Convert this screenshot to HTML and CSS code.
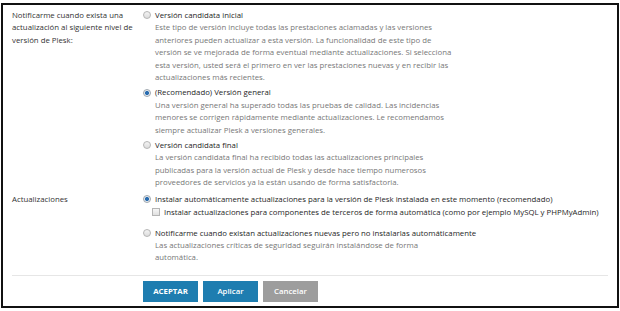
FILE: index.html
```html
<!DOCTYPE html>
<html lang="es">
<head>
<meta charset="utf-8">
<title>Actualizaciones</title>
<link rel="stylesheet" href="styles.css">
</head>
<body>
<div class="frame">
  <div class="row">
    <div class="label">Notificarme cuando exista una actualización al siguiente nivel de versión de Plesk:</div>
    <div class="field">
      <div class="option">
        <div class="opt-title"><span class="radio"></span>Versión candidata inicial</div>
        <div class="desc">Este tipo de versión incluye todas las prestaciones aclamadas y las versiones anteriores pueden actualizar a esta versión. La funcionalidad de este tipo de versión se ve mejorada de forma eventual mediante actualizaciones. Si selecciona esta versión, usted será el primero en ver las prestaciones nuevas y en recibir las actualizaciones más recientes.</div>
      </div>
      <div class="option">
        <div class="opt-title"><span class="radio checked"></span>(Recomendado) Versión general</div>
        <div class="desc">Una versión general ha superado todas las pruebas de calidad. Las incidencias menores se corrigen rápidamente mediante actualizaciones. Le recomendamos siempre actualizar Plesk a versiones generales.</div>
      </div>
      <div class="option">
        <div class="opt-title"><span class="radio"></span>Versión candidata final</div>
        <div class="desc">La versión candidata final ha recibido todas las actualizaciones principales publicadas para la versión actual de Plesk y desde hace tiempo numerosos proveedores de servicios ya la están usando de forma satisfactoria.</div>
      </div>
    </div>
  </div>
  <div class="row">
    <div class="label">Actualizaciones</div>
    <div class="field wide-gap">
      <div class="option">
        <div class="opt-title"><span class="radio checked"></span>Instalar automáticamente actualizaciones para la versión de Plesk instalada en este momento (recomendado)</div>
        <div class="sub"><span class="check"></span>Instalar actualizaciones para componentes de terceros de forma automática (como por ejemplo MySQL y PHPMyAdmin)</div>
      </div>
      <div class="option">
        <div class="opt-title"><span class="radio"></span>Notificarme cuando existan actualizaciones nuevas pero no instalarlas automáticamente</div>
        <div class="desc">Las actualizaciones críticas de seguridad seguirán instalándose de forma automática.</div>
      </div>
    </div>
  </div>
  <div class="buttons">
    <button class="btn primary">ACEPTAR</button>
    <button class="btn apply">Aplicar</button>
    <button class="btn cancel">Cancelar</button>
  </div>
</div>
</body>
</html>
```

FILE: styles.css
```css
html, body {
  margin: 0;
  padding: 0;
  background: #fff;
}
body {
  font-family: "Open Sans", "DejaVu Sans", sans-serif;
  font-size: 7.8px;
  line-height: 12.4px;
  color: #333;
  padding: 3px 0 0 1px;
}
.frame {
  width: 618px;
  height: 305px;
  box-sizing: border-box;
  border: 2px solid #111;
  padding: 4px 9px 0 9px;
}
.row {
  display: grid;
  grid-template-columns: 131px 1fr;
  margin-bottom: 4px;
}
.label {
  color: #333;
  width: 122px;
}
.field {
  display: flex;
  flex-direction: column;
  gap: 3px;
}
.field.wide-gap {
  gap: 8px;
}
.opt-title {
  display: flex;
  align-items: center;
  color: #1e1e1e;
}
.desc {
  color: #777;
  padding-left: 12px;
  width: 302px;
}
.sub {
  display: flex;
  align-items: center;
  color: #1e1e1e;
  padding-left: 9px;
  margin-top: 1px;
}
.radio {
  width: 8px;
  height: 8px;
  box-sizing: border-box;
  border-radius: 50%;
  border: 1px solid #b5b5b5;
  background: linear-gradient(#f4f4f4, #dcdcdc);
  margin-right: 4px;
  flex: none;
}
.radio.checked {
  background: radial-gradient(circle, #2a6db0 0 1.8px, #e8eef4 2.3px, #dcdcdc 100%);
  border-color: #a0a8b0;
}
.check {
  width: 8px;
  height: 8px;
  box-sizing: border-box;
  border: 1px solid #b5b5b5;
  background: linear-gradient(#f6f6f6, #e0e0e0);
  margin-right: 4px;
  flex: none;
}
.buttons {
  display: flex;
  gap: 5px;
  margin-top: 11px;
  border-top: 1px solid #e6e6e6;
  padding: 5px 0 0 131px;
}
.btn {
  width: 55px;
  height: 21px;
  border: none;
  color: #fff;
  font-family: "Open Sans", "DejaVu Sans", sans-serif;
  font-size: 7.8px;
  font-weight: 600;
  padding: 0;
}
.btn.primary {
  background: #1e7db0;
  font-weight: 700;
}
.btn.apply {
  background: #1e7db0;
}
.btn.cancel {
  background: #9d9d9d;
}
```
